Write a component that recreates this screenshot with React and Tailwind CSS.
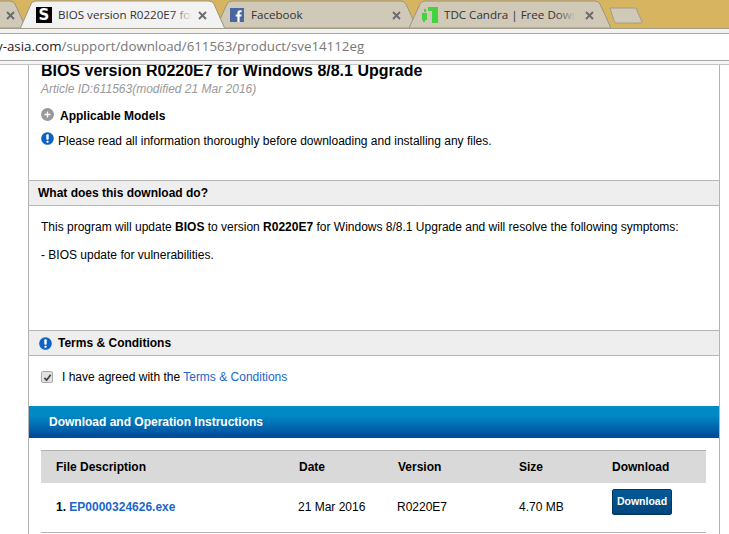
import React from "react";

function InfoIcon({ className }) {
  return (
    <svg viewBox="0 0 14 14" className={className}>
      <circle cx="7" cy="7" r="6.8" fill="#0d62c4" />
      <rect x="5.7" y="2.4" width="2.6" height="6" rx="1" fill="#fff" />
      <rect x="5.8" y="9.3" width="2.4" height="2.3" rx="0.8" fill="#fff" />
    </svg>
  );
}

function CloseIcon() {
  return (
    <svg viewBox="0 0 9 9" className="w-[9px] h-[9px] shrink-0">
      <path d="M1 1 L8 8 M8 1 L1 8" stroke="#6b6b6b" strokeWidth="1.9" />
    </svg>
  );
}

function Tab({ width, active, icon, title, textWidth, className, fade, pad }) {
  const fill = active ? "#f2f2f2" : "#d0c9b8";
  const w = width;
  return (
    <div className={`relative h-[29px] shrink-0 ${className}`} style={{ width: w }}>
      <svg className="absolute inset-0" width={w} height="29">
        <path
          d={`M0 ${active ? 29 : 28} L11 4 Q12.5 1 16 1 L${w - 16} 1 Q${w - 12.5} 1 ${w - 11} 4 L${w} ${active ? 29 : 28} ${active ? "" : "Z"}`}
          fill={fill}
          stroke="#9a9484"
        />
      </svg>
      <div className={`relative flex items-center h-[28px] pt-[2px] ${pad}`}>
        {icon}
        <div className="relative overflow-hidden whitespace-nowrap ml-[6px] text-[11.6px] text-[#333] font-['Open_Sans',sans-serif]" style={{ width: textWidth }}>
          {title}
          <div className={`absolute right-0 inset-y-0 w-[20px] bg-gradient-to-r from-transparent ${fade}`} />
        </div>
        <div className="ml-auto">
          <CloseIcon />
        </div>
      </div>
    </div>
  );
}

function SectionHead({ children }) {
  return (
    <div className="h-[26px] flex items-center bg-[#eeeeee] border-y border-[#b4b4b4] text-[12px] font-bold text-black">
      {children}
    </div>
  );
}

export default function App() {
  return (
    <div className="relative w-[729px] h-[534px] overflow-hidden bg-white font-['Liberation_Sans',Arial,sans-serif]">
      {/* Browser tabs */}
      <div className="relative h-[29px] bg-[#d7b560] flex overflow-hidden border-b border-[#a39c86]">
        <Tab width={206} className="ml-[-180px]" pad="pl-[13px] pr-[11px]" title="" textWidth={0} fade="to-[#d0c9b8]" />
        <Tab
          width={205}
          active
          className="ml-[-6px] z-10"
          pad="pl-[16px] pr-[18px]"
          fade="to-[#f2f2f2]"
          textWidth={134}
          title="BIOS version R0220E7 for Windows"
          icon={
            <div className="w-[16px] h-[16px] bg-black text-white flex items-center justify-center text-[15px] font-black leading-none font-['DejaVu_Sans',sans-serif] shrink-0">
              S
            </div>
          }
        />
        <Tab
          width={201}
          className="ml-[-9px]"
          pad="pl-[14px] pr-[16px]"
          fade="to-[#d0c9b8]"
          textWidth={125}
          title={<span className="ml-[1px]">Facebook</span>}
          icon={
            <svg viewBox="0 0 14 14" className="w-[14px] h-[14px] shrink-0">
              <rect width="14" height="14" fill="#4a66a0" />
              <path d="M9.6 14 V8.6 H11.3 L11.6 6.5 H9.6 V5.3 C9.6 4.6 9.9 4.2 10.7 4.2 H11.7 V2.3 C11.4 2.3 10.8 2.2 10.1 2.2 C8.5 2.2 7.4 3.2 7.4 5 V6.5 H5.7 V8.6 H7.4 V14 Z" fill="#fff" />
            </svg>
          }
        />
        <Tab
          width={202}
          className="ml-[-8px]"
          pad="pl-[13px] pr-[17px]"
          fade="to-[#d0c9b8]"
          textWidth={132}
          title="TDC Candra | Free Download"
          icon={
            <svg viewBox="0 0 16 16" className="w-[16px] h-[16px] shrink-0">
              <path d="M6 0 H16 V16 H10 V4 H6 Z" fill="#43d33c" />
              <path d="M0 6 H5 V13 H3 V15 H1 V13 H0 Z M2 2 H4 V5 H2 Z" fill="#43d33c" />
            </svg>
          }
        />
        <svg width="34" height="18" className="mt-[7px] ml-[-2px] shrink-0">
          <path d="M1 1 H27 L33 15 Q33.5 16 32 16 H7 Q6 16 5.5 15 Z" fill="#d0c9b8" stroke="#a39c86" />
        </svg>
      </div>

      {/* Address bar */}
      <div className="h-[32px] bg-white border-t-[4px] border-t-[#f2f2f2]">
        <div className="h-full border-t border-b border-[#a8a8a8] flex items-center overflow-hidden whitespace-nowrap text-[13.3px] font-['Open_Sans',sans-serif] text-[#777]">
          <span className="ml-[-4px] text-[#222]">y-asia.com</span>
          <span>/support/download/611563/product/sve14112eg</span>
        </div>
      </div>

      {/* Shadow band under the toolbar, lies over the page top */}
      <div className="absolute top-[61px] inset-x-0 h-[4px] bg-[#f4f4f4] border-b border-[#c4c4c4] z-20" />

      {/* Page */}
      <div className="ml-[28px] w-[692px] border-x border-[#b4b4b4] text-[12px] text-black h-[473px] overflow-hidden">
        <div className="px-[12px]">
          <h1 className="text-[16px] font-bold leading-[20px]">BIOS version R0220E7 for Windows 8/8.1 Upgrade</h1>
          <p className="italic text-[#999] leading-[14px] mt-[1px]">Article ID:611563(modified 21 Mar 2016)</p>
          <div className="flex items-center h-[14px] mt-[13px]">
            <svg viewBox="0 0 13 13" className="w-[13px] h-[13px] mt-[-4px]">
              <circle cx="6.5" cy="6.5" r="6.5" fill="#999" />
              <path d="M6.5 3.5 V9.5 M3.5 6.5 H9.5" stroke="#fff" strokeWidth="1.3" />
            </svg>
            <span className="ml-[6px] font-bold">Applicable Models</span>
          </div>
          <div className="flex items-center h-[14px] mt-[11px]">
            <InfoIcon className="w-[13px] h-[13px] mt-[-6px]" />
            <span className="ml-[4px]">Please read all information thoroughly before downloading and installing any files.</span>
          </div>
        </div>

        <div className="mt-[32px]">
          <SectionHead><span className="ml-[9px]">What does this download do?</span></SectionHead>
        </div>
        <div className="h-[124px] px-[12px] pt-[14px]">
          <p className="leading-[14px]">
            This program will update <b>BIOS</b> to version <b>R0220E7</b> for Windows 8/8.1 Upgrade and will resolve the following symptoms:
          </p>
          <p className="leading-[14px] mt-[14px]">- BIOS update for vulnerabilities.</p>
        </div>

        <SectionHead>
          <InfoIcon className="w-[13px] h-[13px] ml-[10px]" />
          <span className="ml-[6px]">Terms &amp; Conditions</span>
        </SectionHead>

        <div className="h-[50px] flex items-start pt-[14px] pl-[12px]">
          <span className="w-[12px] h-[12px] mt-[1px] rounded-[2px] border border-[#aaa] bg-[#e2e2e2] flex items-center justify-center">
            <svg viewBox="0 0 10 10" className="w-[9px] h-[9px]">
              <path d="M1.5 5.5 L4 8 L8.5 2" fill="none" stroke="#444" strokeWidth="2" />
            </svg>
          </span>
          <span className="ml-[9px] leading-[14px]">
            I have agreed with the <a className="text-[#1a66cc]">Terms &amp; Conditions</a>
          </span>
        </div>

        <div className="h-[32px] flex items-center pl-[20px] bg-gradient-to-b from-[#0089c5] from-30% to-[#00479a] text-white font-bold">
          Download and Operation Instructions
        </div>

        <div className="ml-[12px] mr-[13px] mt-[12px]">
          <div className="h-[33px] flex items-center bg-[#d9d9d9] border-t border-[#b0b0b0] font-bold">
            <span className="ml-[15px] w-[243px]">File Description</span>
            <span className="w-[99px]">Date</span>
            <span className="w-[121px]">Version</span>
            <span className="w-[93px]">Size</span>
            <span>Download</span>
          </div>
          <div className="h-[50px] flex items-center border-b border-[#b4b4b4]">
            <span className="ml-[15px] w-[242px] font-bold mt-[-2px]">
              1. <a className="text-[#1a66cc]">EP0000324626.exe</a>
            </span>
            <span className="w-[99px] mt-[-2px]">21 Mar 2016</span>
            <span className="w-[122px] mt-[-2px]">R0220E7</span>
            <span className="w-[93px] mt-[-2px]">4.70 MB</span>
            <button className="w-[60px] h-[26px] mt-[-12px] rounded-[2px] border border-[#00365f] bg-gradient-to-b from-[#005b98] to-[#00467d] text-white text-[10.5px] font-bold">
              Download
            </button>
          </div>
        </div>
      </div>
    </div>
  );
}
